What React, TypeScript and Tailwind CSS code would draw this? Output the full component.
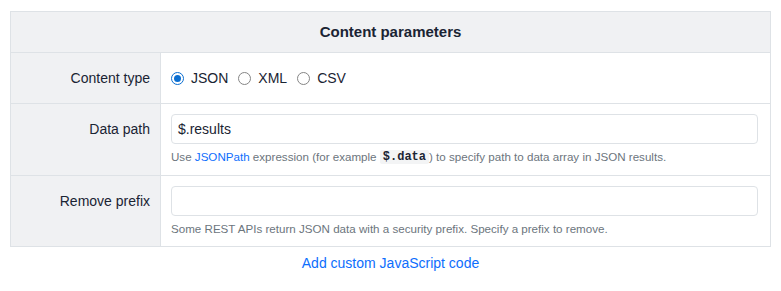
import type { JSX, ReactNode } from 'react'

const FONT = { fontFamily: '"Liberation Sans", Arial, sans-serif' }

type RadioProps = { label: string; checked?: boolean }

const Radio = ({ label, checked }: RadioProps): JSX.Element => (
  <label className="flex items-center">
    {checked ? (
      <span className="flex h-[13px] w-[13px] items-center justify-center rounded-full border border-[#0a6ed1] bg-white">
        <span className="h-[7px] w-[7px] rounded-full bg-[#0a6ed1]" />
      </span>
    ) : (
      <span className="h-[13px] w-[13px] rounded-full border border-[#858585] bg-white" />
    )}
    <span className="ml-[7px] text-[14px] text-[#1a2433]">{label}</span>
  </label>
)

const Row = ({ label, children, center }: { label: string; children: ReactNode; center?: boolean }): JSX.Element => (
  <div className="grid grid-cols-[150px_1fr] border-t border-[#dee2e6]">
    <div
      className={`flex justify-end border-r border-[#dee2e6] bg-[#f0f1f3] pr-[10px] text-[14px] text-[#1a2433] ${
        center ? 'items-center' : 'items-start pt-[10px] leading-[30px]'
      }`}
    >
      {label}
    </div>
    <div className="pl-[10px] pr-[12px]">{children}</div>
  </div>
)

const App = (): JSX.Element => {
  return (
    <div className="h-[291px] w-[781px] bg-white" style={FONT}>
      <div className="px-[10px] pt-[11px]">
        <div className="border-x border-b border-t border-[#dee2e6]">
          <div className="flex h-[40px] items-center justify-center bg-[#f0f1f3] text-[15px] font-bold text-[#1a2433]">
            Content parameters
          </div>

          <Row label="Content type" center>
            <div className="flex h-[50px] items-center gap-[10px]">
              <Radio label="JSON" checked />
              <Radio label="XML" />
              <Radio label="CSV" />
            </div>
          </Row>

          <Row label="Data path">
            <div className="pb-[9px] pt-[10px]">
              <div className="flex h-[30px] items-center rounded-[4px] border border-[#dee2e6] pl-[6px] text-[14px] text-[#1a2433]">
                $.results
              </div>
              <div className="mt-[4px] flex items-center text-[11.6px] leading-[18px] text-[#6c757d]">
                Use&nbsp;<span className="text-[#0d6efd]">JSONPath</span>&nbsp;expression (for example&nbsp;
                <code
                  className="rounded-[2px] bg-[#f3f4f5] px-[3px] text-[12px] font-bold leading-[14px] text-[#1a2433]"
                  style={{ fontFamily: '"Liberation Mono", monospace' }}
                >
                  $.data
                </code>
                ) to specify path to data array in JSON results.
              </div>
            </div>
          </Row>

          <Row label="Remove prefix">
            <div className="pb-[8px] pt-[10px]">
              <div className="h-[30px] rounded-[4px] border border-[#dee2e6]" />
              <div className="mt-[4px] text-[11.6px] leading-[18px] text-[#6c757d]">
                Some REST APIs return JSON data with a security prefix. Specify a prefix to remove.
              </div>
            </div>
          </Row>
        </div>

        <div className="mt-[7px] text-center text-[14px] leading-[18px] text-[#0d6efd]">Add custom JavaScript code</div>
      </div>
    </div>
  )
}

export default App
